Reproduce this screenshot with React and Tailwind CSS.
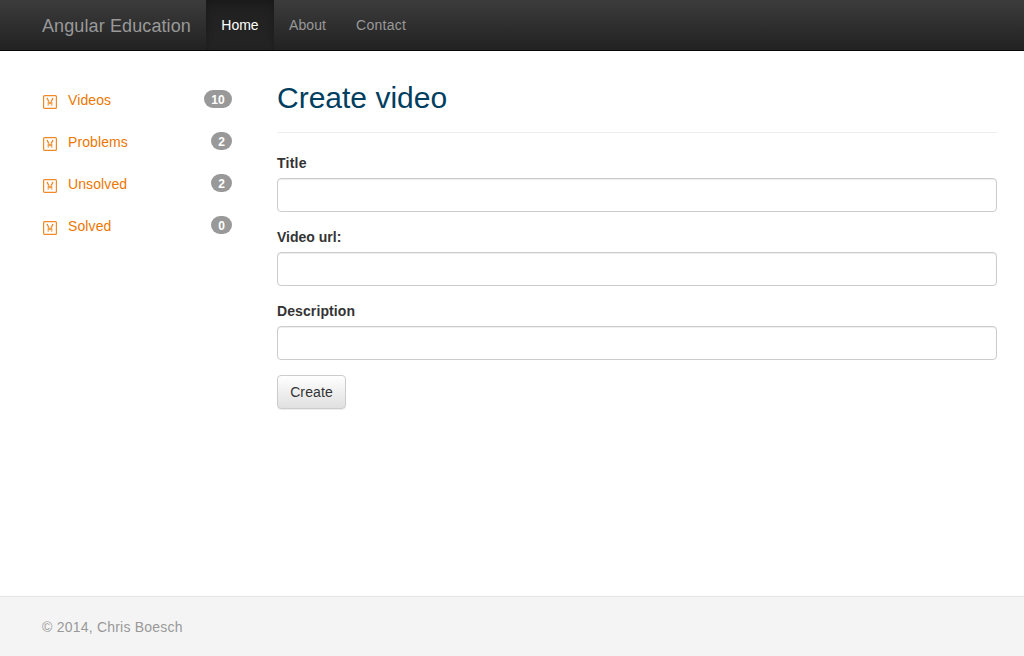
const font = "font-['Liberation_Sans',Arial,sans-serif]";

function MissingGlyph() {
  return (
    <svg className="mt-[9px] h-[14px] w-[14px]" viewBox="0 0 14 14" fill="none" stroke="#ee7600">
      <rect x="0.6" y="0.6" width="12.8" height="12.8" rx="1" strokeWidth="1.2" strokeOpacity="0.85" />
      <path d="M4 3l1.800 3.500M10 3l-1.800 3.500" strokeWidth="1.3" strokeOpacity="0.9" />
      <path d="M5.200 10.800V7.300h3.600v3.500M5.200 7.300l1.800 1.500 1.800-1.500" strokeWidth="1.1" strokeOpacity="0.75" />
    </svg>
  );
}

const links = [
  ["Videos", 10],
  ["Problems", 2],
  ["Unsolved", 2],
  ["Solved", 0],
];

function Field({ label, tracking }) {
  return (
    <label className="mb-[15px] block">
      <span className={`mb-[5px] block text-[14px] leading-5 font-bold text-[#333] ${tracking}`}>{label}</span>
      <input className="block h-[34px] w-full rounded-[4px] border border-[#ccc] bg-white px-3 shadow-[inset_0_1px_1px_rgba(0,0,0,0.075)] outline-none" />
    </label>
  );
}

export default function App() {
  return (
    <div className={`flex h-screen flex-col overflow-hidden bg-white text-[14px] leading-5 text-[#333] ${font}`}>
      <nav className="flex h-[51px] shrink-0 border-b border-[#080808] bg-linear-to-b from-[#3c3c3c] to-[#222] pl-[42px] text-[#999]">
        <a className="w-[164px] pt-[16px] text-[18px] tracking-[0.11px] whitespace-nowrap">Angular Education</a>
        <a className="w-[68px] bg-linear-to-b from-[#202020] to-[#242424] pt-[15px] text-center text-white shadow-[inset_0_3px_9px_rgba(0,0,0,0.25)]">Home</a>
        <a className="w-[67px] pt-[15px] pl-[15px] tracking-[0.08px]">About</a>
        <a className="pt-[15px] pl-[15px] tracking-[0.28px]">Contact</a>
      </nav>
      <main className="flex flex-1">
        <aside className="ml-[43px] w-[189px] pt-[35px]">
          {links.map(([name, count]) => (
            <a key={name} className="flex h-[42px] text-[#ee7600]">
              <MissingGlyph />
              <span className="ml-[11px] pt-[4px] tracking-[0.1px]">{name}</span>
              <span className="mt-[4px] ml-auto h-[18px] rounded-[10px] bg-[#999] px-[7px] pt-px text-[12px] leading-[18px] font-bold tracking-[0.2px] text-white">{count}</span>
            </a>
          ))}
        </aside>
        <section className="ml-[45px] w-[720px] pt-[30px]">
          <h1 className="mb-[20px] h-[52px] border-b border-[#eee] text-[30px] leading-[33px] text-[#003e5f]">Create video</h1>
          <Field label="Title" tracking="tracking-[0.25px]" />
          <Field label="Video url:" tracking="tracking-normal" />
          <Field label="Description" tracking="tracking-[0.1px]" />
          <button className="h-[34px] w-[69px] rounded-[4px] border border-[#ccc] bg-linear-to-b from-white to-[#e0e0e0] tracking-[0.12px] text-[#333] shadow-[inset_0_1px_0_rgba(255,255,255,0.15),0_1px_1px_rgba(0,0,0,0.075)]">Create</button>
        </section>
      </main>
      <footer className="h-[60px] shrink-0 border-t border-[#e5e5e5] bg-[#f4f4f4] pt-[20px] pl-[42px] tracking-[0.22px] text-[#999]">© 2014, Chris Boesch</footer>
    </div>
  );
}
